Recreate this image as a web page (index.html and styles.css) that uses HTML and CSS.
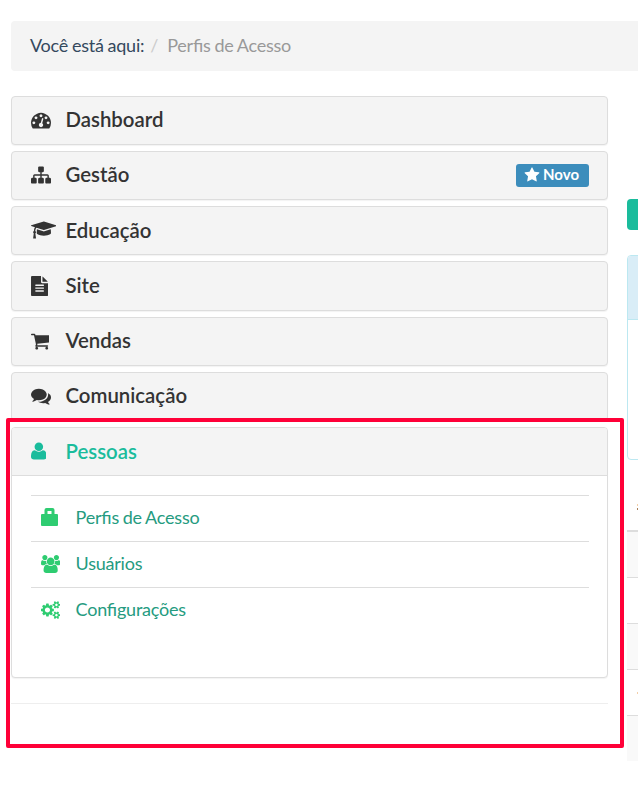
FILE: index.html
```html
<!DOCTYPE html>
<html lang="pt-BR">
<head>
<meta charset="utf-8">
<title>Perfis de Acesso</title>
<link rel="stylesheet" href="styles.css">
</head>
<body>
<nav class="breadcrumb"><span class="here">Você está aqui:</span><span class="sep">/</span><span class="current">Perfis de Acesso</span></nav>
<div class="columns">
<aside class="sidebar">
<div class="panel"><div class="heading"><span class="icon"><svg width="20" height="20" viewBox="0 0 1792 1792"><path d="M384 1152q0-53-37.5-90.5t-90.5-37.5-90.5 37.5-37.5 90.5 37.5 90.5 90.5 37.5 90.5-37.5 37.5-90.5zm192-448q0-53-37.5-90.5t-90.5-37.5-90.5 37.5-37.5 90.5 37.5 90.5 90.5 37.5 90.5-37.5 37.5-90.5zm428 481l101-382q6-26-7.5-48.5t-38.5-29.5-48 6.5-30 39.5l-101 382q-60 5-107 43.5t-63 98.5q-20 77 20 146t117 89 146-20 89-117q16-60-6-117t-72-91zm660-33q0-53-37.5-90.5t-90.5-37.5-90.5 37.5-37.5 90.5 37.5 90.5 90.5 37.5 90.5-37.5 37.5-90.5zm-640-640q0-53-37.5-90.5t-90.5-37.5-90.5 37.5-37.5 90.5 37.5 90.5 90.5 37.5 90.5-37.5 37.5-90.5zm448 192q0-53-37.5-90.5t-90.5-37.5-90.5 37.5-37.5 90.5 37.5 90.5 90.5 37.5 90.5-37.5 37.5-90.5zm320 448q0 261-141 483-19 29-54 29h-1402q-35 0-54-29-141-221-141-483 0-182 71-348t191-286 286-191 348-71 348 71 286 191 191 286 71 348z"/></svg></span><span class="title">Dashboard</span></div></div>
<div class="panel"><div class="heading"><span class="icon"><svg width="20" height="20" viewBox="0 0 1792 1792"><path d="M1792 1248v320q0 40-28 68t-68 28h-320q-40 0-68-28t-28-68v-320q0-40 28-68t68-28h96v-192h-512v192h96q40 0 68 28t28 68v320q0 40-28 68t-68 28h-320q-40 0-68-28t-28-68v-320q0-40 28-68t68-28h96v-192h-512v192h96q40 0 68 28t28 68v320q0 40-28 68t-68 28h-320q-40 0-68-28t-28-68v-320q0-40 28-68t68-28h96v-192q0-52 38-90t90-38h512v-192h-96q-40 0-68-28t-28-68v-320q0-40 28-68t68-28h320q40 0 68 28t28 68v320q0 40-28 68t-68 28h-96v192h512q52 0 90 38t38 90v192h96q40 0 68 28t28 68z"/></svg></span><span class="title">Gestão</span><span class="badge"><svg width="16" height="16" viewBox="0 0 1792 1792"><path d="M1728 647q0 22-26 48l-363 354 86 500q1 7 1 20 0 21-10.5 35.5t-30.5 14.5q-19 0-40-12l-449-236-449 236q-22 12-40 12-21 0-31.5-14.5t-10.5-35.5q0-6 2-20l86-500-364-354q-25-27-25-48 0-37 56-46l502-73 225-455q19-41 49-41t49 41l225 455 502 73q56 9 56 46z"/></svg><span class="label">Novo</span></span></div></div>
<div class="panel"><div class="heading"><span class="icon"><svg width="25.7" height="20" viewBox="0 0 2304 1792"><path d="M1774 836l18 316q4 69-82 128t-235 93.5-323 34.5-323-34.5-235-93.5-82-128l18-316 574 181q22 7 48 7t48-7zm530-324q0 23-22 31l-1120 352q-4 1-10 1t-10-1l-652-206q-43 34-71 111.5t-34 178.5q63 36 63 109 0 69-58 107l58 433q2 14-8 25-9 11-24 11h-192q-15 0-24-11-10-11-8-25l58-433q-58-38-58-107 0-73 65-111 11-207 98-330l-333-104q-22-8-22-31t22-31l1120-352q4-1 10-1t10 1l1120 352q22 8 22 31z"/></svg></span><span class="title">Educação</span></div></div>
<div class="panel"><div class="heading"><span class="icon"><svg width="17.2" height="20" viewBox="128 0 1536 1792"><path d="M1596 476q14 14 28 36h-472v-472q22 14 36 28zm-476 164h544v1056q0 40-28 68t-68 28h-1344q-40 0-68-28t-28-68v-1600q0-40 28-68t68-28h800v544q0 40 28 68t68 28zm160 736v-64q0-14-9-23t-23-9h-704q-14 0-23 9t-9 23v64q0 14 9 23t23 9h704q14 0 23-9t9-23zm0-256v-64q0-14-9-23t-23-9h-704q-14 0-23 9t-9 23v64q0 14 9 23t23 9h704q14 0 23-9t9-23zm0-256v-64q0-14-9-23t-23-9h-704q-14 0-23 9t-9 23v64q0 14 9 23t23 9h704q14 0 23-9t9-23z"/></svg></span><span class="title">Site</span></div></div>
<div class="panel"><div class="heading"><span class="icon"><svg width="18.6" height="20" viewBox="64 0 1664 1792"><path d="M704 1536q0 52-38 90t-90 38-90-38-38-90 38-90 90-38 90 38 38 90zm896 0q0 52-38 90t-90 38-90-38-38-90 38-90 90-38 90 38 38 90zm128-1088v512q0 24-16.5 42.5t-40.5 21.5l-1044 122q13 60 13 70 0 16-24 64h920q26 0 45 19t19 45-19 45-45 19h-1024q-26 0-45-19t-19-45q0-11 8-31.5t16-36 21.5-40 15.5-29.5l-177-823h-204q-26 0-45-19t-19-45 19-45 45-19h256q16 0 28.5 6.5t19.5 15.5 13 24.5 8 26 5.5 29.5 4.5 26h1201q26 0 45 19t19 45z"/></svg></span><span class="title">Vendas</span></div></div>
<div class="panel"><div class="heading"><span class="icon"><svg width="20" height="20" viewBox="0 0 1792 1792"><path d="M1408 768q0 139-94 257t-256.5 186.5-353.5 68.5q-86 0-176-16-124 88-278 128-36 9-86 16h-3q-11 0-20.5-8t-11.5-21q-1-3-1-6.5t.5-6.5 2-6l2.5-5t3.5-5.5 4-5 4.5-5 4-4.5q5-6 23-25t26-29.5 22.5-29 25-38.5 20.5-44q-124-72-195-177t-71-224q0-139 94-257t256.5-186.5 353.5-68.5 353.5 68.5 256.5 186.5 94 257zm384 256q0 120-71 224.5t-195 176.5q10 24 20.5 44t25 38.5 22.5 29 26 29.5 23 25q1 1 4 4.5t4.5 5 4 5 3.5 5.5l2.5 5t2 6 .5 6.5-1 6.5q-3 14-13 22t-22 7q-50-7-86-16-154-40-278-128-90 16-176 16-271 0-472-132 58 4 88 4 161 0 309-45t264-129q125-92 192-212t67-254q0-77-23-152 129 71 204 178t75 230z"/></svg></span><span class="title">Comunicação</span></div></div>
<div class="panel open"><div class="heading"><span class="icon"><svg width="15.7" height="20" viewBox="192 0 1408 1792"><path d="M1600 1405q0 120-73 189.5t-194 69.5h-874q-121 0-194-69.5t-73-189.5q0-53 3.5-103.5t14-109 26.5-108.5 43-97.5 62-81 85.5-53.5 111.5-20q9 0 42 21.5t74.5 48 108 48 133.5 21.5 133.5-21.5 108-48 74.5-48 42-21.5q61 0 111.5 20t85.5 53.5 62 81 43 97.5 26.5 108.5 14 109 3.5 103.5zm-320-893q0 159-112.5 271.5t-271.5 112.5-271.5-112.5-112.5-271.5 112.5-271.5 271.5-112.5 271.5 112.5 112.5 271.5z"/></svg></span><span class="title">Pessoas</span></div>
<ul class="menu">
<li><span class="icon"><svg class="bag" width="17" height="18" viewBox="0 0 17 18"><path fill-rule="evenodd" d="M1 6h2.500V2q0-2 2-2h6q2 0 2 2v4H16q1 0 1 1v10q0 1-1 1H1q-1 0-1-1V7q0-1 1-1zM6.500 3v3h4V3z"/></svg></span><a>Perfis de Acesso</a></li>
<li><span class="icon"><svg width="19.3" height="18" viewBox="0 0 1920 1792"><path d="M593 896q-162 5-265 128h-134q-82 0-138-40.500t-56-118.500q0-353 124-353 6 0 43.500 21t97.500 42.500 119 21.500q67 0 133-23-5 37-5 66 0 139 81 256zm1071 637q0 120-73 189.500t-194 69.500h-874q-121 0-194-69.500t-73-189.500q0-53 3.500-103.500t14-109 26.500-108.500 43-97.500 62-81 85.500-53.500 111.500-20q10 0 43 21.500t73 48 107 48 135 21.500 135-21.500 107-48 73-48 43-21.500q61 0 111.500 20t85.500 53.500 62 81 43 97.500 26.500 108.500 14 109 3.500 103.500zm-1024-1277q0 106-75 181t-181 75-181-75-75-181 75-181 181-75 181 75 75 181zm704 384q0 159-112.500 271.500t-271.500 112.500-271.500-112.500-112.500-271.500 112.500-271.500 271.500-112.500 271.500 112.500 112.500 271.500zm576 225q0 78-56 118.500t-138 40.500h-134q-103-123-265-128 81-117 81-256 0-29-5-66 66 23 133 23 59 0 119-21.500t97.500-42.500 43.500-21q124 0 124 353zm-128-609q0 106-75 181t-181 75-181-75-75-181 75-181 181-75 181 75 75 181z"/></svg></span><a>Usuários</a></li>
<li><span class="icon"><svg width="19.3" height="18" viewBox="0 0 1920 1792"><path d="M896 896q0-106-75-181t-181-75-181 75-75 181 75 181 181 75 181-75 75-181zm768 512q0-52-38-90t-90-38-90 38-38 90q0 53 37.500 90.500t90.500 37.500 90.500-37.500 37.500-90.500zm0-1024q0-52-38-90t-90-38-90 38-38 90q0 53 37.500 90.500t90.500 37.500 90.500-37.500 37.500-90.500zm-384 421v185q0 10-7 19.500t-16 10.500l-155 24q-11 35-32 76 34 48 90 115 7 11 7 20 0 12-7 19-23 30-82.500 89.500t-78.500 59.500q-11 0-21-7l-115-90q-37 19-77 31-11 108-23 155-7 24-30 24h-186q-11 0-20-7.500t-10-17.500l-23-153q-34-10-75-31l-118 89q-7 7-20 7-11 0-21-8-144-133-144-160 0-9 7-19 10-14 41-53t47-61q-23-44-35-82l-152-24q-10-1-17-9.500t-7-19.500v-185q0-10 7-19.500t16-10.500l155-24q11-35 32-76-34-48-90-115-7-11-7-20 0-12 7-20 22-30 82-89t79-59q11 0 21 7l115 90q34-18 77-32 11-108 23-154 7-24 30-24h186q11 0 20 7.500t10 17.500l23 153q34 10 75 31l118-89q8-7 20-7 11 0 21 8 144 133 144 160 0 8-7 19-12 16-42 54t-45 60q23 48 34 82l152 23q10 2 17 10.500t7 19.500zm640 533v140q0 16-149 31-12 27-30 52 51 113 51 138 0 4-4 7-122 71-124 71-8 0-46-47t-52-68q-20 2-30 2t-30-2q-14 21-52 68t-46 47q-2 0-124-71-4-3-4-7 0-25 51-138-18-25-30-52-149-15-149-31v-140q0-16 149-31 13-29 30-52-51-113-51-138 0-4 4-7 4-2 35-20t59-34 30-16q8 0 46 46.500t52 67.500q20-2 30-2t30 2q51-71 92-112l6-2q4 0 124 70 4 3 4 7 0 25-51 138 17 23 30 52 149 15 149 31zm0-1024v140q0 16-149 31-12 27-30 52 51 113 51 138 0 4-4 7-122 71-124 71-8 0-46-47t-52-68q-20 2-30 2t-30-2q-14 21-52 68t-46 47q-2 0-124-71-4-3-4-7 0-25 51-138-18-25-30-52-149-15-149-31v-140q0-16 149-31 13-29 30-52-51-113-51-138 0-4 4-7 4-2 35-20t59-34 30-16q8 0 46 46.500t52 67.500q20-2 30-2t30 2q51-71 92-112l6-2q4 0 124 70 4 3 4 7 0 25-51 138 17 23 30 52 149 15 149 31z"/></svg></span><a>Configurações</a></li>
</ul></div>
<hr>
</aside>
<main class="content">
<div class="button"></div>
<div class="info"><div class="info-head"></div></div>
<div class="table"><div class="thead"><i></i><i class="dark"></i></div><div class="row odd"></div><div class="row"></div><div class="row odd"></div><div class="row"><i></i></div><div class="row odd"></div></div>
</main>
</div>
<div class="highlight"></div>
</body>
</html>
```
FILE: styles.css
```css
* { box-sizing: border-box; }
body {
  margin: 0;
  padding: 21px 0 0 11px;
  height: 796px;
  overflow: hidden;
  background: #fff;
  color: #2d2f33;
  font: 400 18px/26px Lato, "Open Sans", sans-serif;
}
svg { display: block; fill: currentColor; }
.breadcrumb {
  display: flex;
  align-items: center;
  height: 50px;
  margin-right: -10px;
  padding: 0 0 2px 19px;
  border-radius: 4px;
  background: #f4f4f4;
}
.breadcrumb, .menu {
  letter-spacing: -.22px;
  word-spacing: -.6px;
  font-feature-settings: "liga" 1;
}
.here { color: #34495e; }
.sep { padding: 0 9px 0 6px; color: #ccc; }
.current { color: #999; }
.columns {
  display: grid;
  grid-template-columns: 597px 30px;
  gap: 19px;
  margin-top: 24.8px;
}
.panel {
  height: 49.2px;
  margin-bottom: 6px;
  border: 1px solid #ddd;
  border-radius: 4px;
  background: #f4f4f4;
  box-shadow: 0 1px 1px rgba(0, 0, 0, .05);
}
.heading {
  display: flex;
  align-items: center;
  height: 47.2px;
  padding: 0 18px;
  color: #333;
}
.heading .icon { width: 35.5px; padding: 0 0 .8px .6px; }
.title { padding-bottom: 2.4px; font-size: 20.4px; font-weight: 600; }
.badge {
  display: flex;
  align-items: center;
  gap: 3px;
  width: 73px;
  height: 23px;
  margin-left: auto;
  padding-left: 8px;
  border-radius: 3px;
  background: #3c8dbc;
  color: #fff;
  font-size: 15px;
  font-weight: 700;
}
.badge svg { margin-top: -2px; }
.label { padding-bottom: 3px; }
.open { height: 251px; background: #fff; }
.open .heading {
  height: 48px;
  border-bottom: 1px solid #ddd;
  border-radius: 3px 3px 0 0;
  background: #f4f4f4;
  color: #1abc9c;
}
.open .icon { padding-bottom: 0; }
.open .title { padding-bottom: 0; }
.menu { margin: 19px 18px 0 19px; padding: 0; list-style: none; }
.menu li {
  display: flex;
  align-items: center;
  height: 46px;
  padding-left: 9.4px;
  border-top: 1px solid #ddd;
  color: #259b80;
}
.menu a { padding-bottom: 2px; }
.menu .icon { width: 35.2px; padding: 0 0 1px .3px; color: #2ecc71; }
.menu .bag { margin-top: -2px; }
hr { height: 1px; margin: 25px 0 0; border: 0; background: #eee; }
.content { padding-top: 103.2px; }
.button { height: 31px; border-radius: 4px; background: #1abc9c; }
.info {
  height: 205px;
  margin-top: 25px;
  border: 1px solid #bce8f1;
  border-radius: 4px;
}
.info-head {
  height: 64px;
  border-bottom: 1px solid #bce8f1;
  border-radius: 3px 0 0;
  background: #d9edf7;
}
.table { margin-top: 25px; }
.thead { height: 47px; padding: 19px 0 0 10px; border-bottom: 2px solid #ddd; }
.table i { display: block; width: 1px; height: 2px; margin-bottom: 2px; background: #f3cfa9; }
.table .dark { background: #a98059; }
.row { height: 46px; border-bottom: 1px solid #ddd; padding: 22px 0 0 10px; }
.row:last-child { height: 45px; border: 0; }
.odd { background: #f9f9f9; }
.highlight {
  position: absolute;
  left: 6px;
  top: 418px;
  width: 618px;
  height: 330px;
  border: 4px solid #ff0038;
  border-radius: 2px;
}
```
